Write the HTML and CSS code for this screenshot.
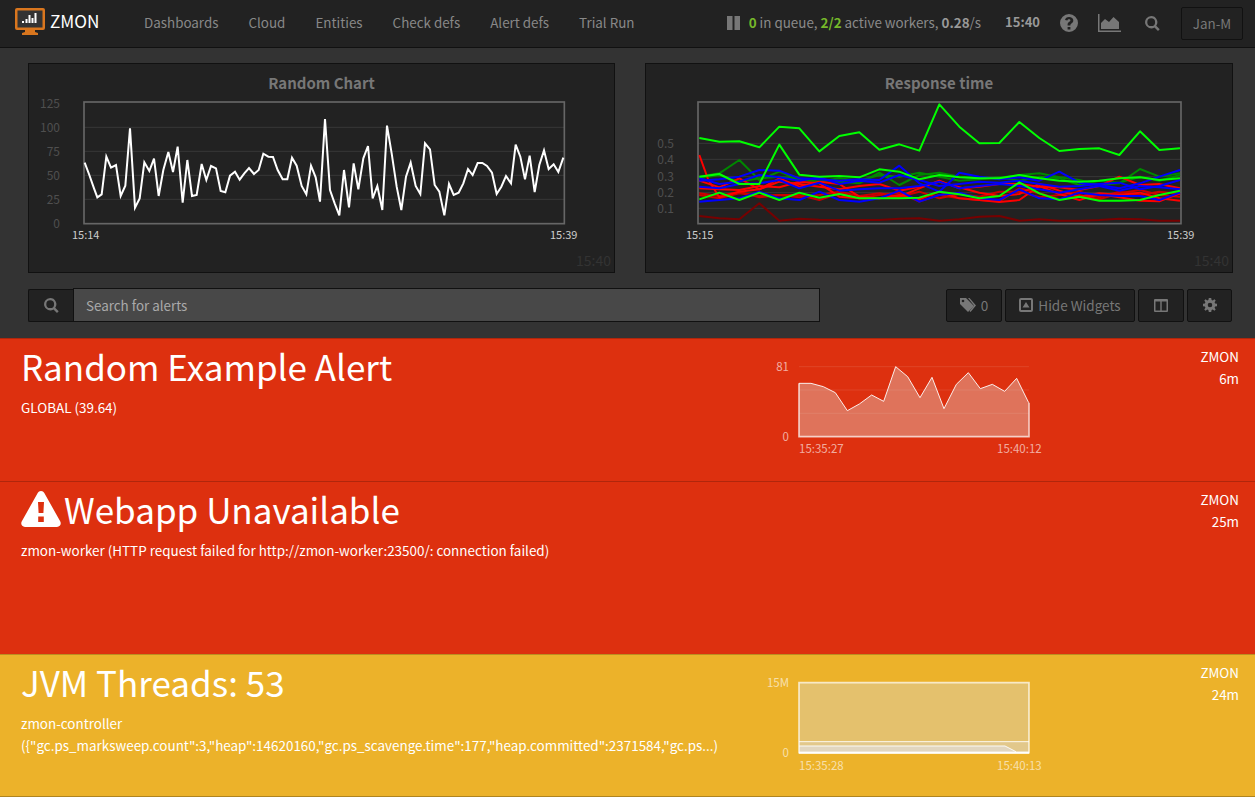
FILE: index.html
```html
<!DOCTYPE html>
<html lang="en">
<head>
<meta charset="utf-8">
<title>ZMON</title>
<link rel="stylesheet" href="styles.css">
</head>
<body>
<header class="topbar">
  <a class="brand">
    <svg class="logo" viewBox="0 0 30 27"><path class="logo-o" d="M2 0h26a2 2 0 0 1 2 2v18a2 2 0 0 1-2 2h-8v2l3 1v2H7v-2l3-1v-2H2a2 2 0 0 1-2-2V2a2 2 0 0 1 2-2z"/><rect class="logo-s" x="2.500" y="2.500" width="25" height="17"/><path class="logo-b" d="M7 13h2v2H7zM10.500 11h2v4h-2zM13.500 7h2v8h-2zM16.500 10h2v5h-2zM19.500 5h2v10h-2z"/></svg>
    <span>ZMON</span>
  </a>
  <nav class="nav">
    <a>Dashboards</a><a>Cloud</a><a>Entities</a><a>Check defs</a><a>Alert defs</a><a>Trial Run</a>
  </nav>
  <div class="status">
    <svg class="ic pause" viewBox="0 0 13 14"><path d="M0 0h5.500v14H0zM7.500 0H13v14H7.500z"/></svg>
    <span class="status-text"><b class="ok">0</b> in queue, <b class="ok">2/2</b> active workers, <b>0.28</b>/s</span>
    <b class="clock">15:40</b>
    <svg class="ic help" viewBox="0 0 18 18"><path fill-rule="evenodd" d="M9 0a9 9 0 1 1 0 18A9 9 0 0 1 9 0zM7.600 13v2.500h2.800V13zM9 3C6.800 3 5.400 4.100 5 6l2.400.6C7.600 5.700 8.100 5.300 9 5.300s1.400.4 1.400 1.100c0 .6-.4.900-1.100 1.400-1 .7-1.700 1.400-1.700 2.700v.9h2.800v-.6c0-.6.300-.9 1-1.400 1-.7 1.900-1.500 1.900-3C13.300 4.300 11.500 3 9 3z"/></svg>
    <svg class="ic area" viewBox="0 0 23 18"><path d="M0 0h1.500v16.500H23V18H0z"/><path d="M3 15V9l4-4 4 3 4.500-5L21 8v7z"/></svg>
    <svg class="ic find" viewBox="0 0 15 15"><path d="M6.200 0a6.200 6.200 0 0 1 5 9.800l3.500 3.500-1.700 1.700-3.500-3.500A6.200 6.200 0 1 1 6.200 0zm0 2.300a3.900 3.900 0 1 0 0 7.800 3.900 3.900 0 0 0 0-7.800z"/></svg>
    <a class="user">Jan-M</a>
  </div>
</header>

<section class="charts">
  <div class="panel">
    <h3 class="panel-title">Random Chart</h3>
    <svg class="plot" viewBox="0 38 585 170">
      <g transform="translate(-9,-4) scale(.33333)">
        <path class="grid" d="M192 202H1633M192 274H1633M192 346H1633M192 418H1633"/>
        <rect class="frame" x="192" y="126" width="1441" height="365"/>
        <polyline class="white" points="194,308 208,345 222,385 232,412 245,403 259,290 273,323 288,315 302,408 316,377 330,205 345,443 359,415 373,307 388,333 402,296 416,408 430,330 445,276 459,336 473,260 488,428 502,300 516,408 530,405 545,312 559,360 573,318 588,325 602,393 616,397 630,347 645,335 659,359 673,340 687,324 702,342 716,330 730,281 745,290 759,291 773,330 788,358 802,358 816,293 830,317 845,378 859,403 873,317 887,352 900,425 915,177 930,390 944,430 958,466 972,330 987,442 1001,310 1015,388 1030,295 1044,258 1058,415 1072,378 1087,450 1101,197 1115,280 1130,380 1144,450 1158,350 1172,308 1187,378 1201,402 1215,250 1230,268 1244,375 1258,395 1273,466 1287,372 1301,405 1316,398 1330,370 1344,327 1358,345 1373,309 1387,309 1401,318 1416,338 1430,402 1444,380 1458,348 1473,370 1487,254 1501,290 1515,358 1529,287 1544,396 1558,315 1572,271 1586,327 1601,313 1615,336 1630,293"/>
      </g>
      <g class="ylab">
        <text x="31" y="44">125</text><text x="31" y="68">100</text><text x="31" y="92">75</text><text x="31" y="116">50</text><text x="31" y="140">25</text><text x="31" y="164">0</text>
      </g>
      <text class="xlab" x="43" y="175">15:14</text>
      <text class="xlab" x="521" y="175">15:39</text>
    </svg>
    <span class="stamp">15:40</span>
  </div>
  <div class="panel">
    <h3 class="panel-title">Response time</h3>
    <svg class="plot" viewBox="0 38 585 170">
      <g transform="translate(-6,-4) scale(.33333)">
        <path class="grid" d="M174 250H1623M174 298H1623M174 350H1623M174 398H1623M174 445H1623"/>
        <rect class="frame" x="174" y="126" width="1449" height="365"/>
        <polyline class="l s-dred" points="178,468 238,475 298,478 358,430 418,482 478,476 538,479 598,480 658,480 718,480 778,476 838,475 898,482 958,478 1018,470 1078,468 1138,482 1198,478 1258,482 1318,482 1378,480 1438,476 1500,478 1558,482 1620,482"/>
        <polyline class="l s-dgreen" points="178,350 238,340 298,300 358,360 418,335 478,360 538,358 598,365 658,370 718,338 778,375 838,345 898,338 958,350 1018,353 1078,353 1138,345 1198,340 1258,352 1318,360 1378,375 1438,370 1500,327 1558,350 1620,340"/>
        <polyline class="l s-dgreen" points="178,355 238,345 298,365 358,355 418,350 478,358 538,365 598,355 658,362 718,345 778,350 838,338 898,350 958,362 1018,358 1078,352 1138,362 1198,350 1258,355 1318,375 1378,362 1438,368 1500,350 1558,362 1620,345"/>
        <polyline class="l s-dkr" points="178,405 238,415 298,400 358,408 418,405 478,405 538,420 598,400 658,415 718,405 778,398 838,425 898,405 958,415 1018,420 1078,424 1138,385 1198,400 1258,418 1318,405 1378,418 1438,400 1500,390 1558,405 1620,410"/>
        <polyline class="l s-dkr" points="178,400 238,408 298,395 358,412 418,405 478,412 538,405 598,395 658,408 718,400 778,410 838,395 898,415 958,402 1018,410 1078,395 1138,395 1198,412 1258,405 1318,395 1378,412 1438,395 1500,405 1558,395 1620,402"/>
        <polyline class="l s-red" points="178,285 205,360 238,412 298,395 358,388 418,355 478,380 538,365 598,372 658,410 718,415 778,410 838,385 898,362 958,385 1018,380 1078,372 1138,372 1198,380 1258,382 1318,390 1378,378 1438,350 1500,375 1558,372 1620,385"/>
        <polyline class="l s-red" points="178,362 238,382 298,355 358,388 418,365 478,372 538,380 598,388 658,378 718,372 778,392 838,380 898,365 958,382 1018,398 1078,408 1138,402 1198,372 1258,392 1318,410 1378,400 1438,405 1500,398 1558,415 1620,422"/>
        <polyline class="l s-red" points="178,385 238,388 298,390 358,378 418,382 478,365 538,370 598,410 658,415 718,415 778,405 838,418 898,395 958,415 1018,420 1078,426 1138,420 1198,378 1258,402 1318,420 1378,402 1438,412 1500,422 1558,424 1620,400"/>
        <polyline class="l s-blue" points="178,362 238,358 298,350 358,330 418,332 478,355 538,358 598,362 658,358 718,360 778,317 838,370 898,395 958,338 1018,350 1078,358 1138,352 1198,362 1258,335 1318,368 1378,375 1438,385 1500,370 1558,350 1620,330"/>
        <polyline class="l s-blue" points="178,380 238,385 298,372 358,370 418,360 478,385 538,368 598,392 658,388 718,385 778,385 838,378 898,365 958,385 1018,378 1078,372 1138,378 1198,388 1258,398 1318,388 1378,378 1438,392 1500,378 1558,382 1620,388"/>
        <polyline class="l s-blue" points="178,425 238,420 298,415 358,395 418,415 478,420 538,395 598,420 658,425 718,415 778,392 838,425 898,405 958,398 1018,415 1078,420 1138,388 1198,415 1258,418 1318,398 1378,405 1438,408 1500,408 1558,420 1620,398"/>
        <polyline class="l s-blue" points="178,355 238,372 298,365 358,345 418,352 478,362 538,352 598,372 658,362 718,368 778,345 838,360 898,378 958,372 1018,365 1078,368 1138,362 1198,372 1258,380 1318,378 1378,372 1438,368 1500,388 1558,378 1620,360"/>
        <polyline class="l s-green" points="178,234 238,245 298,244 358,262 418,200 478,205 538,274 598,228 658,217 718,269 778,253 838,272 898,133 958,200 1018,250 1078,249 1138,186 1198,234 1258,273 1318,267 1378,265 1438,285 1500,214 1558,270 1620,265"/>
        <polyline class="l s-green" points="178,350 238,342 298,372 358,372 418,254 478,344 538,350 598,348 658,352 718,328 778,335 838,358 898,345 958,352 1018,355 1078,355 1138,345 1198,355 1258,362 1318,365 1378,362 1438,355 1500,352 1558,360 1620,355"/>
        <polyline class="l s-green" points="178,418 238,398 298,420 358,398 418,420 478,398 538,413 598,402 658,415 718,415 778,415 838,413 898,395 958,403 1018,415 1078,408 1138,367 1198,400 1258,420 1318,410 1378,422 1438,422 1500,420 1558,405 1620,392"/>
      </g>
      <g class="ylab">
        <text x="28" y="84">0.5</text><text x="28" y="100">0.4</text><text x="28" y="117">0.3</text><text x="28" y="133">0.2</text><text x="28" y="149">0.1</text>
      </g>
      <text class="xlab" x="40" y="175">15:15</text>
      <text class="xlab" x="521" y="175">15:39</text>
    </svg>
    <span class="stamp">15:40</span>
  </div>
</section>

<section class="toolbar">
  <span class="addon"><svg class="ic find" viewBox="0 0 15 15"><path d="M6.200 0a6.200 6.200 0 0 1 5 9.800l3.500 3.500-1.700 1.700-3.500-3.500A6.200 6.200 0 1 1 6.200 0zm0 2.300a3.900 3.900 0 1 0 0 7.800 3.900 3.900 0 0 0 0-7.800z"/></svg></span>
  <div class="search">Search for alerts</div>
  <div class="btns">
    <a class="btn b-tag"><svg class="ic tag" viewBox="0 0 16 14"><path d="M0 0h6l8 8-6 6-8-8z"/><path d="M8 0h1.500l6.500 7.500-5.500 6.500-1-1L14 7.500z"/><circle class="hole" cx="3" cy="3" r="1.300"/></svg>0</a>
    <a class="btn b-hide"><svg class="ic up" viewBox="0 0 14 14"><path fill-rule="evenodd" d="M2 0h10a2 2 0 0 1 2 2v10a2 2 0 0 1-2 2H2a2 2 0 0 1-2-2V2a2 2 0 0 1 2-2zm0 2v10h10V2zm1.500 7.500L7 4l3.500 5.500z"/></svg>Hide Widgets</a>
    <a class="btn b-split"><svg class="ic cols" viewBox="0 0 14 13"><path fill-rule="evenodd" d="M1 0h12a1 1 0 0 1 1 1v11a1 1 0 0 1-1 1H1a1 1 0 0 1-1-1V1a1 1 0 0 1 1-1zm.500 2.500v9H6.300v-9zm6.200 0v9h4.800v-9z"/></svg></a>
    <a class="btn b-gear"><svg class="ic gear" viewBox="0 0 14 14"><path fill-rule="evenodd" d="M5.800 0h2.400l.4 1.900 1.200.5L11.400 1.300l1.300 1.300-1.100 1.600.5 1.200 1.900.4v2.400l-1.900.4-.5 1.200 1.100 1.600-1.300 1.300-1.600-1.100-1.200.5-.4 1.900H5.800l-.4-1.900-1.200-.5-1.600 1.100-1.300-1.300 1.100-1.600-.5-1.200L0 8.200V5.800l1.900-.4.500-1.200L1.300 2.600l1.300-1.300 1.600 1.100 1.200-.5zM7 4.700a2.300 2.300 0 1 0 0 4.600 2.300 2.300 0 0 0 0-4.600z"/></svg></a>
  </div>
</section>

<main class="alerts">
  <article class="alert crit h143">
    <div class="alert-main">
      <h2 class="alert-title">Random Example Alert</h2>
      <p class="alert-desc">GLOBAL (39.64)</p>
    </div>
    <svg class="mini" viewBox="0 0 280 110">
      <g transform="translate(-1,-3) scale(.33333)">
        <path class="mgrid" d="M117 50H807M117 120H807M117 190H807"/>
        <path class="marea" d="M117 260V100L153 100 190 110 226 128 262 182 298 162 335 135 371 154 407 50 443 80 480 143 516 82 552 176 589 103 625 68 661 116 697 103 734 124 770 85 806 158V260z"/>
        <polyline class="mline" points="117,100 153,100 190,110 226,128 262,182 298,162 335,135 371,154 407,50 443,80 480,143 516,82 552,176 589,103 625,68 661,116 697,103 734,124 770,85 806,158"/>
        <path class="maxis" d="M117 100V260H807V158"/>
      </g>
      <text class="mlab end" x="28" y="18">81</text>
      <text class="mlab end" x="28" y="88">0</text>
      <text class="mlab" x="38" y="100">15:35:27</text>
      <text class="mlab" x="236" y="100">15:40:12</text>
    </svg>
    <div class="alert-side">ZMON<br>6m</div>
  </article>
  <article class="alert crit h173">
    <div class="alert-main">
      <h2 class="alert-title"><svg class="warn" viewBox="0 0 40 36"><path fill-rule="evenodd" d="M20 0c1.500 0 2.600.8 3.300 2l16 28.500c1.300 2.500-.3 5.500-3.300 5.500H4c-3 0-4.600-3-3.300-5.500L16.700 2C17.400.8 18.500 0 20 0zM17 11l.6 11h4.800L23 11zm.2 14.500V31h5.600v-5.500z"/></svg>Webapp Unavailable</h2>
      <p class="alert-desc">zmon-worker (HTTP request failed for http://zmon-worker:23500/: connection failed)</p>
    </div>
    <div class="alert-side">ZMON<br>25m</div>
  </article>
  <article class="alert amber h143">
    <div class="alert-main">
      <h2 class="alert-title">JVM Threads: 53</h2>
      <p class="alert-desc">zmon-controller<br>({"gc.ps_marksweep.count":3,"heap":14620160,"gc.ps_scavenge.time":177,"heap.committed":2371584,"gc.ps...)</p>
    </div>
    <svg class="mini" viewBox="0 0 280 110">
      <g transform="translate(-1,-4) scale(.33333)">
        <rect class="j1" x="117" y="53" width="690" height="177"/>
        <path class="j2" d="M117 230H807V263H117z"/>
        <path class="j3" d="M117 243H735L768 260H807V263H117z"/>
        <path class="mline" d="M117 230H807M117 243H735L768 260"/>
        <path class="maxis" d="M117 263V53H807V263z"/>
        <path class="maxis2" d="M117 263H807"/>
      </g>
      <text class="mlab end" x="28" y="18">15M</text>
      <text class="mlab end" x="28" y="88">0</text>
      <text class="mlab" x="38" y="101">15:35:28</text>
      <text class="mlab" x="236" y="101">15:40:13</text>
    </svg>
    <div class="alert-side">ZMON<br>24m</div>
  </article>
</main>
</body>
</html>
```
FILE: styles.css
```css
* { box-sizing: border-box; }
html, body { margin: 0; padding: 0; }
body {
  width: 1255px;
  height: 797px;
  overflow: hidden;
  background: #333;
  font-family: "Noto Sans CJK JP", "Noto Sans", sans-serif;
  font-size: 13.4px;
  line-height: 20px;
  color: #fff;
}
svg { display: block; }
svg text { font-family: "Noto Sans CJK JP", "Noto Sans", sans-serif; }

.topbar {
  height: 48px;
  display: flex;
  align-items: center;
  background: #222;
  border-bottom: 1px solid #111;
  padding: 0 12px 1px 15px;
}
.brand { display: flex; align-items: center; gap: 5px; width: 129px; margin-top: -4px; font-size: 17.2px; color: #fff; }
.logo { width: 30px; height: 27px; }
.logo-o { fill: #d9761e; }
.logo-s { fill: #333; }
.logo-b { fill: #fff; }
.nav { display: flex; gap: 30px; margin-top: -2px; font-size: 13.4px; color: #888; }
.status { display: flex; align-items: center; margin-left: auto; color: #8a8a8a; }
.status-text { font-size: 13.4px; margin: -2px 0 0 9px; }
.status b { font-weight: 700; color: #999; }
.status b.ok { color: #76b82a; }
.ic { fill: #777; flex: none; }
.pause { width: 13px; height: 14px; }
.status .clock { margin: -2px 0 0 24px; font-size: 13px; }
.help { width: 18px; height: 18px; margin-left: 20px; }
.area { width: 23px; height: 18px; margin-left: 20px; }
.find { width: 15px; height: 15px; }
.status .find { margin-left: 24px; }
.user { width: 62px; height: 33px; margin-left: 21px; display: flex; align-items: center; justify-content: center; border: 1px solid #111; border-radius: 2px; font-size: 13.4px; color: #777; }

.charts { display: flex; gap: 30px; padding: 15px 22px 0 28px; }
.panel { position: relative; width: 587px; height: 210px; background: #222; border: 1px solid #111; }
.panel + .panel { width: 588px; }
.panel-title { margin: 0; height: 38px; padding-top: 8px; text-align: center; font-size: 15px; line-height: 22px; font-weight: 700; color: #777; }
.plot { width: 585px; height: 170px; overflow: visible; }
.grid { fill: none; stroke: #383838; stroke-width: 3; }
.frame { fill: none; stroke: #666; stroke-width: 5; }
.white { fill: none; stroke: #fff; stroke-width: 6; }
.l { fill: none; stroke-width: 6; stroke-linejoin: round; }
.s-dred { stroke: #700; }
.s-dgreen { stroke: #080; }
.s-dkr { stroke: #c00; }
.s-red { stroke: #f00; }
.s-blue { stroke: #00f; }
.s-green { stroke: #0f0; }
.ylab text { text-anchor: end; font-size: 12px; fill: #4f4f4f; }
.xlab { font-size: 11px; fill: #ccc; }
.stamp { position: absolute; right: 3px; bottom: 0; font-size: 14px; line-height: 24px; color: #333; }

.toolbar { display: flex; align-items: center; height: 34px; margin: 15px 23px 0 28px; }
.addon { width: 45px; height: 33px; display: flex; align-items: center; justify-content: center; background: #222; border: 1px solid #111; border-right: 0; border-radius: 2px 0 0 2px; }
.search { width: 747px; height: 34px; padding: 0 12px; display: flex; align-items: center; background: #484848; border: 1px solid #111; font-size: 13.4px; color: #aaa; }
.btns { display: flex; gap: 3px; margin-left: auto; }
.btn { height: 33px; display: flex; align-items: center; justify-content: center; gap: 5px; background: #222; border: 1px solid #111; border-radius: 2px; font-size: 13.5px; color: #777; }
.b-tag { width: 56px; }
.b-hide { width: 130px; }
.b-split { width: 46px; }
.b-gear { width: 45px; }
.tag { width: 16px; height: 14px; }
.hole { fill: #222; }
.up { width: 14px; height: 14px; }
.cols { width: 14px; height: 13px; }
.gear { width: 14px; height: 14px; }

.alerts { margin-top: 16px; }
.alert { display: flex; align-items: flex-start; padding: 0 16px 0 21px; border-top: 1px solid rgba(0,0,0,.2); }
.h143 { height: 143px; }
.h173 { height: 173px; }
.crit { background: #dd300f; }
.amber { background: #ecb22a; border-bottom: 1px solid rgba(0,0,0,.25); }
.alert-main { flex: 1; min-width: 0; padding-top: 5px; }
.alert-title { margin: 0; display: flex; align-items: center; gap: 3px; font-size: 35px; line-height: 44px; font-weight: 400; color: #fff; }
.warn { width: 40px; height: 36px; fill: #fff; }
.alert-desc { margin: 8px 0 0; font-size: 13.45px; line-height: 22px; }
.mini { width: 280px; height: 110px; margin: 14px 138px 0 0; flex: none; overflow: visible; }
.mgrid { fill: none; stroke: rgba(255,255,255,.1); stroke-width: 3; }
.marea { fill: rgba(225,225,215,.38); }
.mline { fill: none; stroke: rgba(255,255,255,.9); stroke-width: 3; }
.maxis { fill: none; stroke: rgba(255,255,255,.7); stroke-width: 5; }
.maxis2 { fill: none; stroke: #fff; stroke-width: 6; }
.j1 { fill: rgba(220,210,190,.45); }
.j2 { fill: rgba(220,215,205,.6); }
.j3 { fill: rgba(225,220,215,.7); }
.mlab { font-size: 11.5px; fill: rgba(255,255,255,.62); }
.end { text-anchor: end; }
.alert-side { width: 60px; margin-left: auto; padding-top: 6px; text-align: right; font-size: 13.4px; line-height: 22px; }
```
